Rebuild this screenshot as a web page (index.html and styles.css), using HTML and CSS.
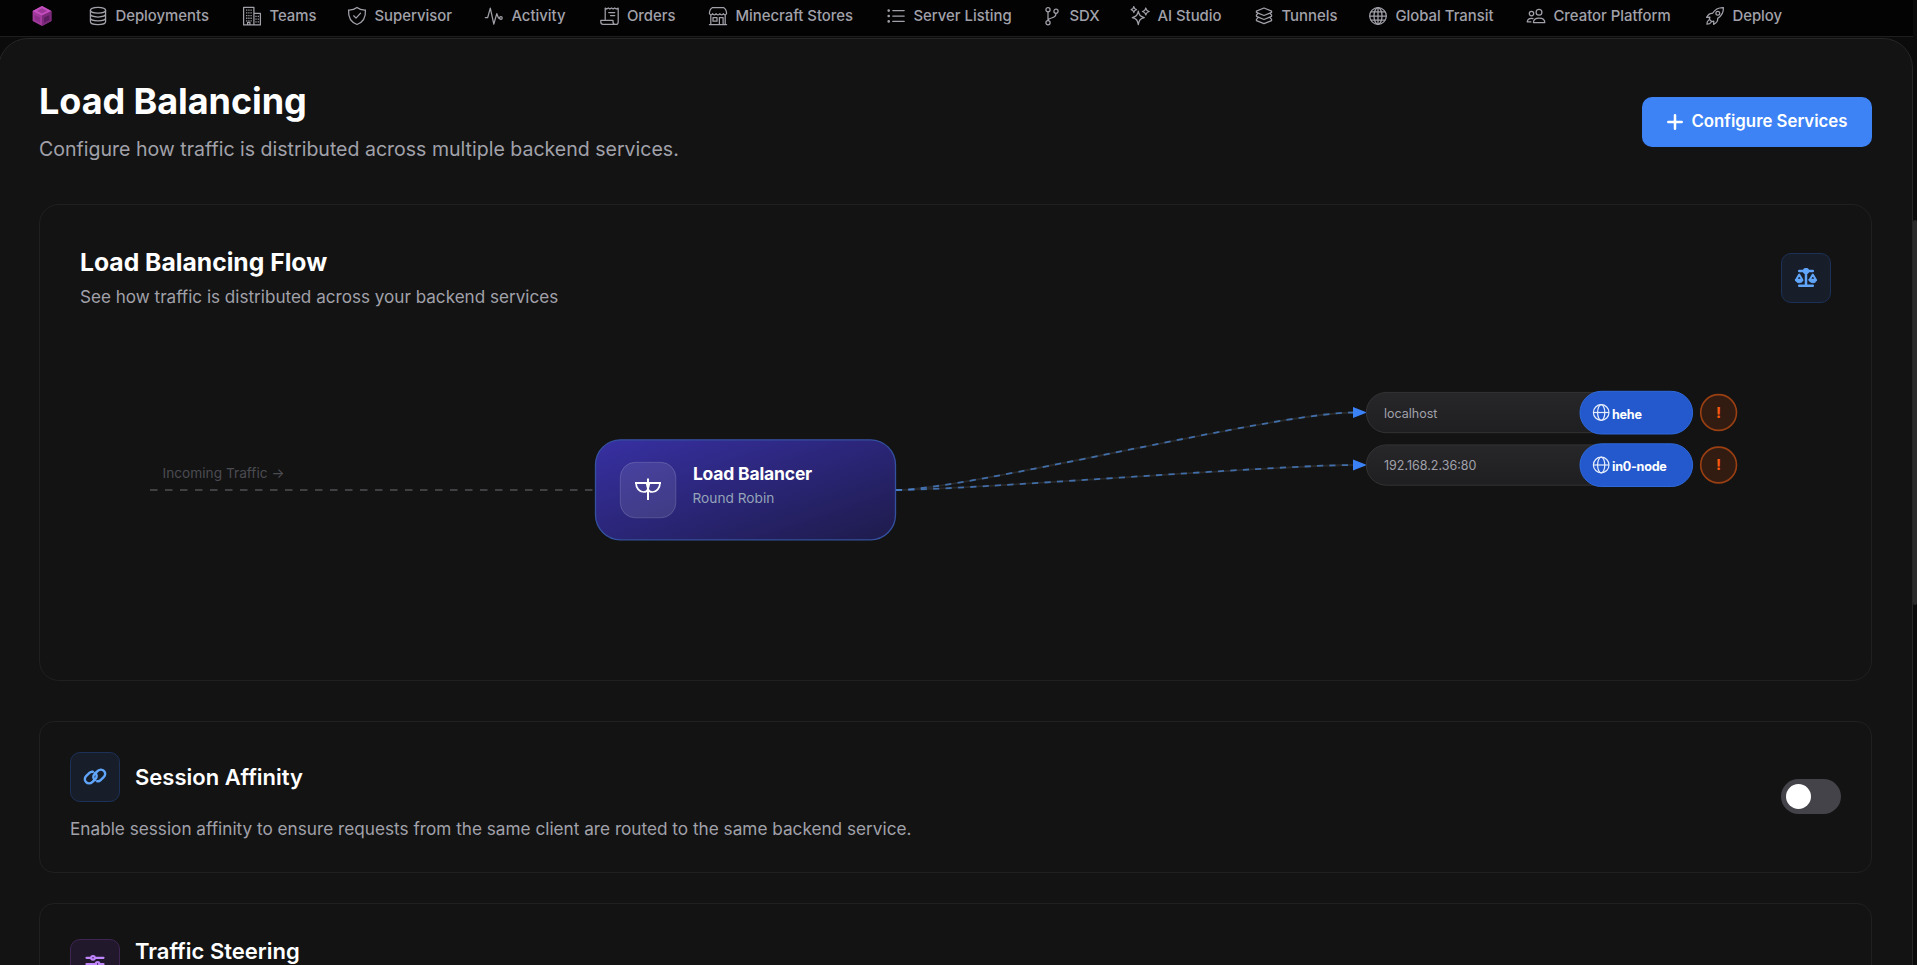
FILE: index.html
```html
<!DOCTYPE html>
<html lang="en">
<head>
    <meta charset="UTF-8">
    <meta name="viewport" content="width=device-width, initial-scale=1.0">
    <title>Load Balancing</title>
    <link rel="stylesheet" href="styles.css">
</head>
<body>

    <div class="page">

        <!-- Top Navigation -->
        <nav class="topnav">
            <a class="logo" href="#">
                <svg width="20" height="22" viewBox="0 0 20 22">
                    <path d="M10 1l9.4 5v10L10 21 .6 16V6z" fill="#a23a9e"/>
                    <path d="M10 1l9.4 5L10 10.600.6 6z" fill="#c64fc0"/>
                    <path d="M10 10.600L19.400 6v10L10 21z" fill="#7d2a7c"/>
                    <path d="M12 12.600l5.400-2.700v5L12 17.800z" fill="#5e1d60"/>
                    <path d="M8 12.600L2.600 9.900v5L8 17.800z" fill="#8d2f8b"/>
                    <path d="M10 3.200l5.200 2.700L10 8.400 4.800 5.900z" fill="#9c3799"/>
                </svg>
            </a>
            <div class="nav-items">
                <a class="nav-item" href="#">
                    <svg class="nav-icon" viewBox="0 0 20 20"><ellipse cx="10" cy="4.200" rx="7.600" ry="2.900"/><path d="M2.400 4.200v11.600c0 1.600 3.400 2.900 7.600 2.900s7.600-1.300 7.600-2.900V4.200M2.400 8.100c0 1.600 3.400 2.900 7.600 2.900s7.600-1.300 7.600-2.900M2.400 12c0 1.600 3.400 2.900 7.600 2.900s7.600-1.300 7.600-2.900"/></svg>
                    <span>Deployments</span>
                </a>
                <a class="nav-item" href="#">
                    <svg class="nav-icon" viewBox="0 0 20 20"><path d="M1.600 18.900V1.300h10.300v17.600zM11.900 7.300h6.500v11.600h-6.500M5.600 18.900v-2.600h2.300v2.600"/><path d="M4.700 3.500v12M6.900 3.500v12M9.100 3.500v12M14 9.800v7.500M16.300 9.800v7.500" stroke-linecap="butt" stroke-dasharray="1.300 1.400"/></svg>
                    <span>Teams</span>
                </a>
                <a class="nav-item" href="#">
                    <svg class="nav-icon" viewBox="0 0 20 20"><path d="M10 1.400c2.400 2 5.200 2.700 8.400 2.600.5 6.700-2.100 12.100-8.400 14.500C3.700 16.100 1.100 10.700 1.600 4 4.800 4.100 7.600 3.400 10 1.400z"/><path d="M6.700 9.800l2.300 2.300 4.600-5"/></svg>
                    <span>Supervisor</span>
                </a>
                <a class="nav-item" href="#">
                    <svg class="nav-icon" viewBox="0 0 20 20"><path d="M1.300 11.500h2.400l2.600-9.300 3.500 16 3-10.500 1.800 4.500h1"/><circle cx="16.900" cy="12" r="1.300"/></svg>
                    <span>Activity</span>
                </a>
                <a class="nav-item" href="#">
                    <svg class="nav-icon" viewBox="0 0 20 20"><path d="M5.200 13.300V2l1.500 1 1.600-1 1.600 1 1.600-1 1.600 1 1.600-1 1.600 1 1.900-.8v13.700c0 1.600-.9 2.500-2.200 2.500H3.200c-1.500 0-2.400-1-2.400-2.600v-1.500h12.200v1.500c0 1.600 1 2.600 2.400 2.600M8.700 6.500h6M10.500 9.500h4.200"/></svg>
                    <span>Orders</span>
                </a>
                <a class="nav-item" href="#">
                    <svg class="nav-icon" viewBox="0 0 20 20"><path d="M4.200 1.700h11.600c1.500.8 2.600 3 2.800 5.700-.4 1.700-2.600 1.900-3.200.2-.6 1.600-3 1.600-3.500 0-.6 1.600-3.200 1.600-3.800 0-.5 1.600-2.900 1.600-3.500 0-.6 1.700-2.800 1.500-3.200-.2.200-2.700 1.300-4.900 2.800-5.700zM2.800 9v9.400M17.200 9v9.400M1.400 18.500h17.200M11.400 18.300v-6.800h3.700v6.800M5 11.500h4v3.700H5z"/></svg>
                    <span>Minecraft Stores</span>
                </a>
                <a class="nav-item" href="#">
                    <svg class="nav-icon" viewBox="0 0 20 20"><path d="M6.800 4.600h11.400M6.800 10h11.400M6.800 15.400h11.400"/><circle cx="2.700" cy="4.600" r=".7"/><circle cx="2.700" cy="10" r=".7"/><circle cx="2.700" cy="15.400" r=".7"/></svg>
                    <span>Server Listing</span>
                </a>
                <a class="nav-item" href="#">
                    <svg class="nav-icon" viewBox="0 0 20 20"><circle cx="6" cy="3.700" r="2.100"/><circle cx="6" cy="16.700" r="2.100"/><circle cx="14" cy="5.200" r="2.100"/><path d="M6 5.800v8.800M14 7.300c0 3.600-2 4.200-4.400 4.700-2 .4-3.200 1-3.600 2.600"/></svg>
                    <span>SDX</span>
                </a>
                <a class="nav-item" href="#">
                    <svg class="nav-icon" viewBox="0 0 20 20"><path d="M8.300 5.200c.8 4 2 5.400 6 6.400-4 1-5.200 2.400-6 7-.8-4.600-2-6-6-7 4-1 5.200-2.400 6-6.400zM3.800.6c.3 1.900 1 2.600 2.700 3-1.700.4-2.400 1-2.700 2.900-.3-1.900-1-2.500-2.700-2.900 1.700-.4 2.400-1.100 2.700-3zM15.800 2c.4 2.200 1.200 3 3.400 3.500-2.200.5-3 1.300-3.400 3.500-.4-2.200-1.200-3-3.400-3.500 2.200-.5 3-1.300 3.400-3.500z"/></svg>
                    <span>AI Studio</span>
                </a>
                <a class="nav-item" href="#">
                    <svg class="nav-icon" viewBox="0 0 20 20"><path d="M10 2l7.600 3.200v1.200L10 9.500 2.400 6.400V5.200zM2.400 9l.1 1.400L10 13.500l7.500-3.100.1-1.400M2.400 9l1.500-1.400M17.600 9l-1.500-1.400M2.400 13.400v1.200l7.600 3.100 7.600-3.100v-1.200l-1.500-1.500M2.400 13.400l1.500-1.500"/></svg>
                    <span>Tunnels</span>
                </a>
                <a class="nav-item" href="#">
                    <svg class="nav-icon" viewBox="0 0 20 20"><circle cx="10" cy="10" r="8.300"/><ellipse cx="10" cy="10" rx="4" ry="8.300"/><path d="M10 1.700v16.600M1.700 10h16.600M3 5.800h14M3 14.200h14"/></svg>
                    <span>Global Transit</span>
                </a>
                <a class="nav-item" href="#">
                    <svg class="nav-icon" viewBox="0 0 20 20"><circle cx="13" cy="6.200" r="2.900"/><circle cx="5.500" cy="7.600" r="2.200"/><path d="M7.400 16.600c0-3 2.300-4.600 5.700-4.600s5.700 1.600 5.700 4.600zM7 12.600c-3-.8-5.600.5-5.800 3.300h3.700"/></svg>
                    <span>Creator Platform</span>
                </a>
                <a class="nav-item" href="#">
                    <svg class="nav-icon" viewBox="0 0 20 20"><path d="M18.400 1.600c-5.200-.2-8.300 1.500-10.800 5.700C5.200 7 3.200 8.200 1.600 11.400l3.300-.2-.6 2 2.500 2.500 2-.6-.2 3.300c3.200-1.600 4.400-3.600 4.100-6 4.200-2.500 5.900-5.600 5.700-10.800zM3.600 14.200c-1.300.7-1.700 2-1.700 4 2 0 3.300-.4 4-1.700"/><circle cx="12.800" cy="7.200" r="1.900"/></svg>
                    <span>Deploy</span>
                </a>
            </div>
        </nav>

        <main class="panel">

            <!-- Page Header -->
            <header class="page-header">
                <div>
                    <h1>Load Balancing</h1>
                    <p class="subtitle">Configure how traffic is distributed across multiple backend services.</p>
                </div>
                <button class="btn-primary">
                    <svg width="16" height="16" viewBox="0 0 16 16"><path d="M8 1.300v13.400M1.300 8h13.400" stroke="#fff" stroke-width="2.500" stroke-linecap="round"/></svg>
                    <span>Configure Services</span>
                </button>
            </header>

            <!-- Flow Diagram -->
            <section class="card flow-card">
                <div class="flow-header">
                    <div>
                        <h2>Load Balancing Flow</h2>
                        <p>See how traffic is distributed across your backend services</p>
                    </div>
                    <div class="icon-box blue">
                        <svg width="24" height="20" viewBox="0 0 24 20" fill="none" stroke="#60a5fa" stroke-width="2.500" stroke-linecap="round" stroke-linejoin="round">
                            <path d="M5.200 3h13.600M12 3v14.800M5.200 17.800h13.600"/>
                            <circle cx="12" cy="3" r="1.900" fill="#60a5fa"/>
                            <path d="M5.200 6.500L2.100 11.800h6.200zM18.800 6.500l-3.100 5.300h6.200z" stroke-width="2"/>
                            <path d="M1.400 12h7.600c-.6 3.700-7 3.700-7.600 0zM15 12h7.600c-.6 3.700-7 3.700-7.600 0z" fill="#60a5fa" stroke-width="1"/>
                        </svg>
                    </div>
                </div>

                <svg class="flow" viewBox="0 0 1751 300">
                    <defs>
                        <linearGradient id="lbFill" x1="0" y1="0" x2="1" y2="1">
                            <stop offset="0" stop-color="#3730a3"/>
                            <stop offset="1" stop-color="#1e1b4b"/>
                        </linearGradient>
                        <linearGradient id="pillFill" x1="0" y1="0" x2="0" y2="1">
                            <stop offset="0" stop-color="#27272a"/>
                            <stop offset="1" stop-color="#1f1f22"/>
                        </linearGradient>
                        <g id="globe" fill="none" stroke="#e6eefc" stroke-width="1.200">
                            <circle r="7.800"/>
                            <ellipse rx="3.600" ry="7.800"/>
                            <path d="M-7.800 0h15.600"/>
                        </g>
                    </defs>

                    <!-- incoming -->
                    <text class="flow-hint" x="82.500" y="138">Incoming Traffic →</text>
                    <path class="line-in" d="M70 150H515"/>

                    <!-- outgoing -->
                    <path class="line-base" d="M816 150C886 150 1195 72.500 1274 72.500M816 150C886 150 1195 125 1274 125"/>
                    <path class="line-out" d="M816 150C886 150 1195 72.500 1274 72.500"/>
                    <path class="line-out" d="M816 150C886 150 1195 125 1274 125"/>
                    <path d="M1273 67v11l14-5.500zM1273 119.500v11l14-5.500z" fill="#3b82f6"/>

                    <!-- balancer node -->
                    <rect x="515.500" y="99.800" width="300" height="100" rx="25" fill="url(#lbFill)" stroke="#3451a0" stroke-width="1.300"/>
                    <rect class="lb-icon-box" x="540.300" y="122.300" width="55.500" height="55.500" rx="15"/>
                    <g fill="none" stroke="#fff" stroke-width="2">
                        <path d="M568 138.500v21.500M555 143h26"/>
                        <path d="M556 143c0 5 3.500 9 7.500 9 2 0 4-1 4.500-3l-1.500-6M580 143c0 5-3.500 9-7.500 9-2 0-4-1-4.500-3l1.500-6" stroke-width="1.700"/>
                    </g>
                    <text class="lb-title" x="612.900" y="140.300">Load Balancer</text>
                    <text class="lb-mode" x="612.500" y="162.800">Round Robin</text>

                    <!-- backends -->
                    <g>
                        <rect class="pill" x="1286.300" y="52.400" width="260" height="40.300" rx="20.100"/>
                        <text class="host" x="1304" y="78">localhost</text>
                        <rect class="tag" x="1500" y="51.300" width="112.600" height="42.700" rx="21.300"/>
                        <use href="#globe" x="1521.200" y="72.500"/>
                        <text class="tag-name" x="1532" y="78.600">hehe</text>
                        <circle class="warn" cx="1638.600" cy="72.500" r="17.900"/>
                        <text class="warn-mark" x="1638.600" y="78">!</text>
                    </g>
                    <g>
                        <rect class="pill" x="1286.300" y="104.900" width="260" height="40.300" rx="20.100"/>
                        <text class="host" x="1304" y="129.700">192.168.2.36:80</text>
                        <rect class="tag" x="1500" y="103.800" width="112.600" height="42.700" rx="21.300"/>
                        <use href="#globe" x="1521.200" y="125"/>
                        <text class="tag-name" x="1532" y="130.600">in0-node</text>
                        <circle class="warn" cx="1638.600" cy="125" r="17.900"/>
                        <text class="warn-mark" x="1638.600" y="130">!</text>
                    </g>
                </svg>
            </section>

            <!-- Session Affinity -->
            <section class="card option-card">
                <div>
                    <div class="option-title">
                        <div class="icon-box blue">
                            <svg width="24" height="20" viewBox="0 0 24 20" fill="none" stroke="#60a5fa" stroke-width="2.400" stroke-linecap="round">
                                <path d="M11.900 13.200c-2-1.700-2.100-4.400-.4-6.100l3.300-3.200c1.700-1.600 4.500-1.600 6.100 0 1.700 1.600 1.700 4.300 0 6l-3.300 3.200c-1 1-2.300 1.300-3.400 1.100"/>
                                <path d="M12.100 5.800c2 1.700 2.100 4.400.4 6.100l-3.300 3.200c-1.700 1.600-4.500 1.600-6.100 0-1.700-1.600-1.700-4.300 0-6l3.300-3.200c1-1 2.300-1.300 3.400-1.100"/>
                            </svg>
                        </div>
                        <h3>Session Affinity</h3>
                    </div>
                    <p>Enable session affinity to ensure requests from the same client are routed to the same backend service.</p>
                </div>
                <div class="toggle"><span class="knob"></span></div>
            </section>

            <!-- Traffic Steering -->
            <section class="card steering-card">
                <div class="icon-box purple">
                    <svg width="20" height="20" viewBox="0 0 20 20" fill="none" stroke="#c084fc" stroke-width="2.200" stroke-linecap="round">
                        <path d="M1.500 3.800h4.500M10 3.800h8.500M1.500 10h9M14.500 10h4M1.500 16.200h3M8.500 16.200h10"/>
                        <circle cx="8" cy="3.800" r="1.800"/>
                        <circle cx="12.600" cy="10" r="1.800"/>
                        <circle cx="6.500" cy="16.200" r="1.800"/>
                    </svg>
                </div>
                <h3>Traffic Steering</h3>
            </section>

        </main>
    </div>

    <div class="scrollbar"><div class="thumb"></div></div>

</body>
</html>
```
FILE: styles.css
```css
/* General Styles */
* {
    box-sizing: border-box;
}

body {
    margin: 0;
    height: 100vh;
    display: flex;
    overflow: hidden;
    font-family: Inter, "Liberation Sans", sans-serif;
    background-color: #0b0b0b;
    color: #fff;
}

h1, h2, h3, p {
    margin: 0;
}

.page {
    flex: 1;
    min-width: 0;
    overflow: hidden;
}

/* Top Navigation */
.topnav {
    display: flex;
    align-items: center;
    height: 37px;
    padding: 0 0 4px 32px;
    background-color: #030303;
    border-bottom: 1px solid #1e1e1e;
}

.logo {
    display: flex;
    width: 56px;
}

.nav-items {
    display: grid;
    grid-template-columns: 154px 105px 137px 115.5px 108.5px 178px 156px 88px 124px 114px 158px 179px 120px;
}

.nav-item {
    display: flex;
    align-items: center;
    gap: 7.4px;
    font-size: 14.9px;
    font-weight: 500;
    line-height: 20px;
    color: #a1a1aa;
    text-decoration: none;
    white-space: nowrap;
}

.nav-icon {
    width: 20px;
    height: 20px;
    fill: none;
    stroke: #a1a1aa;
    stroke-width: 1.25;
    stroke-linecap: round;
    stroke-linejoin: round;
}

/* Main Panel */
.panel {
    margin: 1px 0 0 -2px;
    height: 1200px;
    padding: 40px;
    background-color: #131313;
    border: 1px solid #262626;
    border-radius: 30px 30px 0 0;
}

.page-header {
    display: flex;
    justify-content: space-between;
    align-items: center;
    margin-bottom: 40px;
}

h1 {
    font-size: 36px;
    line-height: 45px;
    font-weight: 700;
    letter-spacing: -.08px;
}

.subtitle {
    margin-top: 10px;
    font-size: 19.55px;
    line-height: 30px;
    color: #a1a1aa;
}

.btn-primary {
    display: flex;
    align-items: center;
    justify-content: center;
    gap: 9px;
    width: 230px;
    height: 50px;
    padding: 0;
    border: none;
    border-radius: 10px;
    background-color: #3d83f6;
    color: #fff;
    font-family: inherit;
    font-size: 16.8px;
    font-weight: 600;
}

.btn-primary span {
    margin-top: -1px;
}

/* Cards */
.card {
    border: 1px solid #202020;
    border-radius: 15px;
}

.flow-card {
    padding: 40px;
    border-radius: 20px;
    margin-bottom: 40px;
}

.flow-header {
    display: flex;
    justify-content: space-between;
    align-items: center;
    height: 66px;
    margin-bottom: 29px;
}

h2 {
    font-size: 24.7px;
    line-height: 33px;
    font-weight: 700;
}

.flow-header p {
    margin-top: 4px;
    font-size: 17.1px;
    line-height: 27px;
    color: #a1a1aa;
}

.icon-box {
    display: flex;
    align-items: center;
    justify-content: center;
    width: 50px;
    height: 50px;
    border-radius: 10px;
}

.icon-box.blue {
    background-color: #171d29;
    border: 1px solid #1c3157;
}

.icon-box.purple {
    background-color: #21182b;
    border: 1px solid #3e2552;
}

/* Flow Diagram */
.flow {
    display: block;
    width: 100%;
    height: 300px;
}

.flow-hint {
    font-size: 13.7px;
    fill: #4b4b52;
}

.line-in {
    fill: none;
    stroke: #404042;
    stroke-width: 2.2;
    stroke-dasharray: 7.5 7.5;
}

.line-base {
    fill: none;
    stroke: #272727;
    stroke-width: 1.8;
}

.line-out {
    fill: none;
    stroke: #4b86d4;
    stroke-opacity: .75;
    stroke-width: 1.8;
    stroke-dasharray: 6.2 6.2;
}

.lb-icon-box {
    fill: rgba(255, 255, 255, .1);
    stroke: rgba(255, 255, 255, .16);
}

.lb-title {
    font-size: 17.5px;
    font-weight: 700;
    letter-spacing: -.18px;
    fill: #fff;
}

.lb-mode {
    font-size: 13.7px;
    fill: #94a3b8;
}

.pill {
    fill: url(#pillFill);
    stroke: #333336;
}

.host {
    font-size: 12.5px;
    fill: #a1a1aa;
}

.tag {
    fill: #2459cd;
    stroke: #2e69dc;
}

.tag-name {
    font-size: 12.6px;
    font-weight: 700;
    letter-spacing: -.26px;
    fill: #fff;
}

.warn {
    fill: #321c12;
    stroke: #9a3f12;
    stroke-width: 1.6;
}

.warn-mark {
    font-size: 15px;
    font-weight: 700;
    text-anchor: middle;
    fill: #f9580f;
}

/* Option Cards */
.option-card {
    display: flex;
    justify-content: space-between;
    align-items: flex-start;
    height: 152px;
    padding: 30px;
    margin-bottom: 30px;
}

.option-title {
    display: flex;
    align-items: center;
    gap: 15px;
}

h3 {
    font-size: 22px;
    line-height: 33px;
    font-weight: 600;
}

.option-card p {
    margin-top: 13px;
    font-size: 17.2px;
    line-height: 28px;
    color: #a1a1aa;
}

.toggle {
    display: flex;
    align-items: center;
    width: 60px;
    height: 35px;
    margin-top: 27px;
    padding: 5px;
    border-radius: 18px;
    background-color: #434349;
}

.knob {
    width: 25px;
    height: 25px;
    border-radius: 50%;
    background-color: #fff;
}

.steering-card {
    display: flex;
    gap: 15px;
    height: 240px;
    padding: 30px;
}

.steering-card .icon-box {
    margin-top: 5px;
}

.steering-card h3 {
    margin-top: 1px;
}

/* Scrollbar */
.scrollbar {
    width: 4px;
    background-color: #0b0b0b;
}

.thumb {
    height: 385px;
    margin-top: 220px;
    border-radius: 2px;
    background-color: #2b2b2b;
}
```
